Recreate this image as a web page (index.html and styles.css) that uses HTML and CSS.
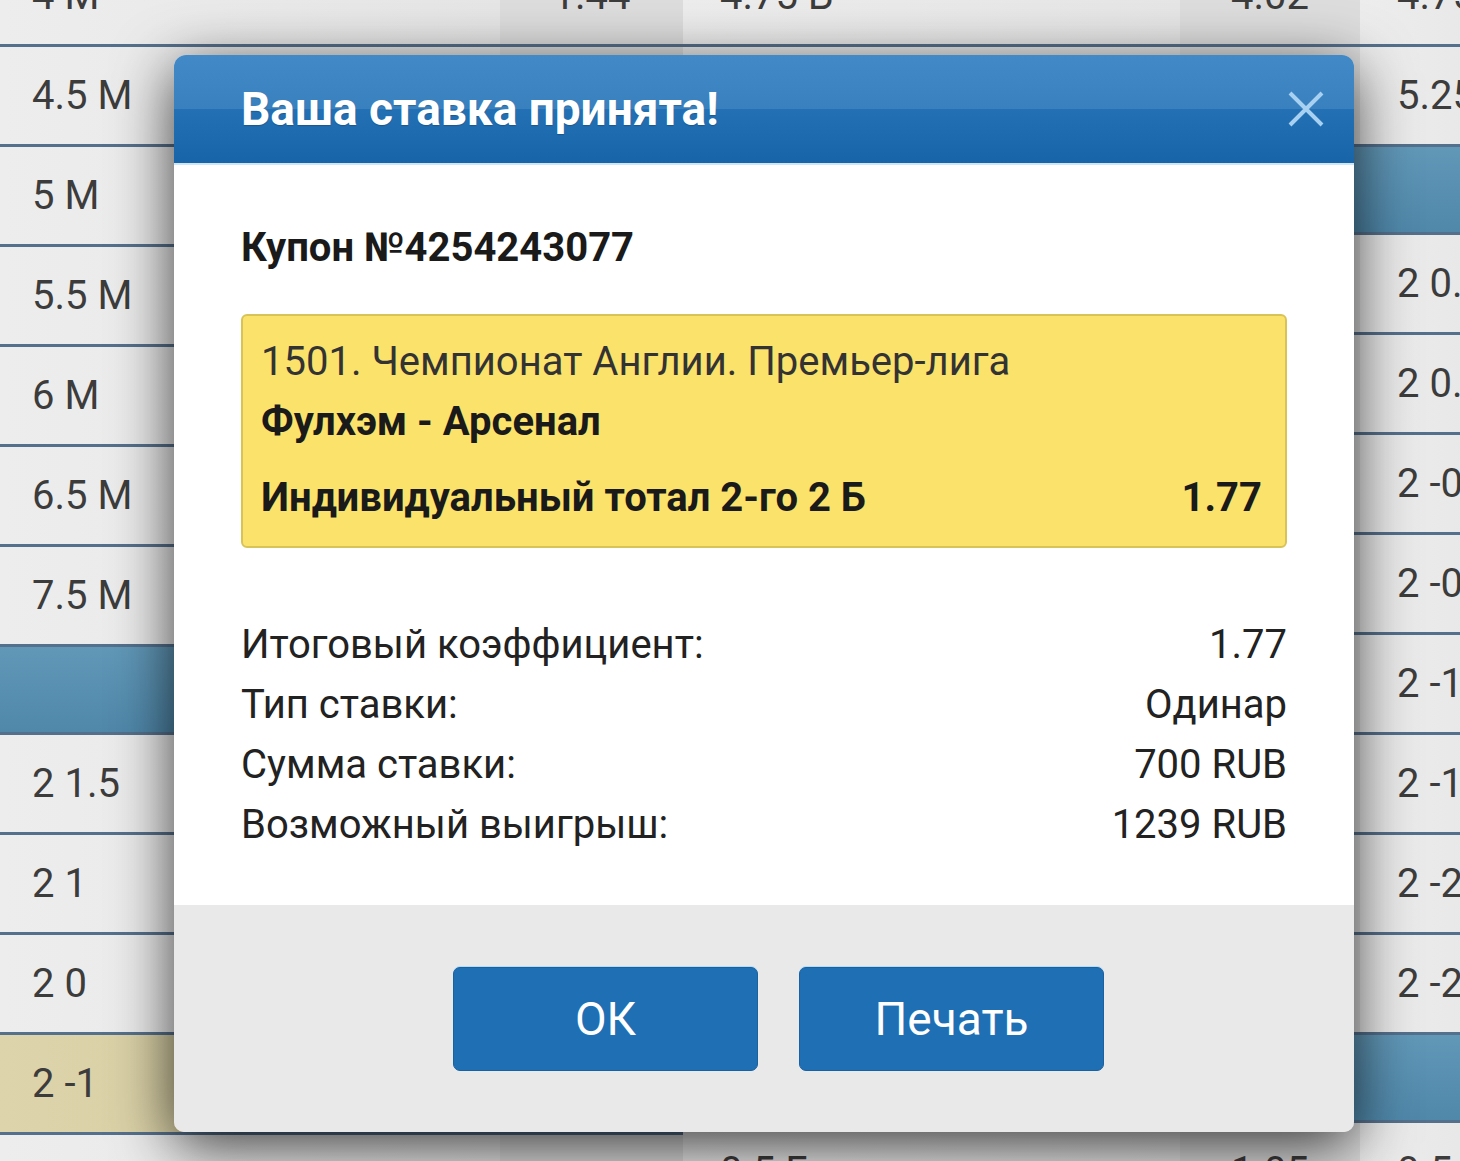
FILE: index.html
```html
<!DOCTYPE html>
<html lang="ru">
<head>
  <meta charset="UTF-8">
  <title>Ваша ставка принята</title>
  <link rel="stylesheet" href="styles.css">
</head>
<body>
  <div class="board">
    <div class="market market-a">
      <div class="row"><div class="cell label">4 М</div><div class="cell odd">1.44</div></div>
      <div class="row"><div class="cell label">4.5 М</div><div class="cell odd"></div></div>
      <div class="row"><div class="cell label">5 М</div><div class="cell odd"></div></div>
      <div class="row"><div class="cell label">5.5 М</div><div class="cell odd"></div></div>
      <div class="row"><div class="cell label">6 М</div><div class="cell odd"></div></div>
      <div class="row"><div class="cell label">6.5 М</div><div class="cell odd"></div></div>
      <div class="row"><div class="cell label">7.5 М</div><div class="cell odd"></div></div>
      <div class="row row-head"></div>
      <div class="row"><div class="cell label">2 1.5</div><div class="cell odd"></div></div>
      <div class="row"><div class="cell label">2 1</div><div class="cell odd"></div></div>
      <div class="row"><div class="cell label">2 0</div><div class="cell odd"></div></div>
      <div class="row row-picked"><div class="cell label">2 -1</div><div class="cell odd"></div></div>
      <div class="row"><div class="cell label"></div><div class="cell odd"></div></div>
    </div>

    <div class="market market-b">
      <div class="row"><div class="cell label">4.75 Б</div><div class="cell odd">4.02</div></div>
      <div class="row"><div class="cell label"></div><div class="cell odd"></div></div>
      <div class="row row-head"></div>
      <div class="row"><div class="cell label"></div><div class="cell odd"></div></div>
      <div class="row"><div class="cell label"></div><div class="cell odd"></div></div>
      <div class="row"><div class="cell label"></div><div class="cell odd"></div></div>
      <div class="row"><div class="cell label"></div><div class="cell odd"></div></div>
      <div class="row"><div class="cell label"></div><div class="cell odd"></div></div>
      <div class="row"><div class="cell label"></div><div class="cell odd"></div></div>
      <div class="row"><div class="cell label"></div><div class="cell odd"></div></div>
      <div class="row"><div class="cell label"></div><div class="cell odd"></div></div>
      <div class="row row-head"></div>
      <div class="row"><div class="cell label">0.5 Б</div><div class="cell odd">1.05</div></div>
    </div>

    <div class="market market-c">
      <div class="row"><div class="cell label">4.75 М</div></div>
      <div class="row"><div class="cell label">5.25 М</div></div>
      <div class="row row-head"></div>
      <div class="row"><div class="cell label">2 0.75</div></div>
      <div class="row"><div class="cell label">2 0.25</div></div>
      <div class="row"><div class="cell label">2 -0.25</div></div>
      <div class="row"><div class="cell label">2 -0.75</div></div>
      <div class="row"><div class="cell label">2 -1.25</div></div>
      <div class="row"><div class="cell label">2 -1.75</div></div>
      <div class="row"><div class="cell label">2 -2.25</div></div>
      <div class="row"><div class="cell label">2 -2.75</div></div>
      <div class="row row-head"></div>
      <div class="row"><div class="cell label">0.5 М</div></div>
    </div>
  </div>

  <div class="modal">
    <div class="modal-header">
      <h1>Ваша ставка принята!</h1>
      <span class="close">
        <svg width="36" height="36" viewBox="0 0 36 36">
          <path d="M2 2 L34 34 M34 2 L2 34" stroke="#a8d0f0" stroke-width="4" fill="none"/>
        </svg>
      </span>
    </div>

    <div class="modal-body">
      <h2>Купон №4254243077</h2>

      <div class="bet">
        <div class="bet-league">1501. Чемпионат Англии. Премьер-лига</div>
        <div class="bet-event">Фулхэм - Арсенал</div>
        <div class="bet-outcome">
          <span>Индивидуальный тотал 2-го 2 Б</span>
          <span>1.77</span>
        </div>
      </div>

      <div class="summary">
        <div class="summary-row"><span>Итоговый коэффициент:</span><span>1.77</span></div>
        <div class="summary-row"><span>Тип ставки:</span><span>Одинар</span></div>
        <div class="summary-row"><span>Сумма ставки:</span><span>700 RUB</span></div>
        <div class="summary-row"><span>Возможный выигрыш:</span><span>1239 RUB</span></div>
      </div>
    </div>

    <div class="modal-footer">
      <button>ОК</button>
      <button>Печать</button>
    </div>
  </div>
</body>
</html>
```

FILE: styles.css
```css
body {
  margin: 0;
  font-family: Roboto, 'Liberation Sans', sans-serif;
  background: #e6e6e6;
  overflow: hidden;
  height: 1161px;
}

/* odds table behind the dialog */
.board {
  display: flex;
  margin-top: -53px;
  height: 1214px;
  overflow: hidden;
}
.market {
  display: flex;
  flex-direction: column;
}
.market-a {
  width: 683px;
}
.market-b {
  width: 677px;
}
.market-c {
  flex: 1;
  overflow: hidden;
}
.row {
  display: flex;
  height: 100px;
  flex-shrink: 0;
  box-sizing: border-box;
  border-bottom: 3px solid #55708c;
  box-shadow: inset 0 2px 0 #d5e6f4;
}
.row-head {
  height: 88px;
  background: linear-gradient(#6198b8, #5088aa);
  box-shadow: none;
}
.cell {
  display: flex;
  align-items: center;
  font-size: 40px;
  color: #3c3c3c;
  white-space: nowrap;
}
.label {
  flex: 1;
  padding-left: 32px;
  background: linear-gradient(to right, #ededed, #e6e6e6);
}
.market-b .label,
.market-c .label {
  padding-left: 37px;
}
.odd {
  width: 183px;
  justify-content: center;
  background: #dddddd;
}
.market-b .odd {
  width: 180px;
}
.row-picked .label {
  background: linear-gradient(to right, #ddd4ab, #d2c89c);
}

/* dialog */
.modal {
  position: absolute;
  left: 174px;
  top: 55px;
  width: 1180px;
  display: flex;
  flex-direction: column;
  border-radius: 12px 12px 10px 10px;
  overflow: hidden;
  box-shadow: 0 14px 60px rgba(0, 0, 0, 0.75);
}
.modal-header {
  height: 110px;
  box-sizing: border-box;
  display: flex;
  align-items: center;
  justify-content: space-between;
  padding: 0 30px 0 67px;
  background: linear-gradient(#428ac7, #3980bf 50%, #2371b4 50%, #1864a9);
  border-bottom: 2px solid #cfe6f7;
}
.modal-header h1 {
  margin: 0;
  font-size: 46px;
  font-weight: bold;
  color: #fff;
  text-shadow: 0 1px 1px rgba(0, 0, 0, 0.2);
}
.close {
  display: flex;
  cursor: pointer;
}

.modal-body {
  background: #fff;
  padding: 58px 67px 50px;
}
.modal-body h2 {
  margin: 0 0 41px;
  font-size: 40px;
  line-height: 50px;
  font-weight: bold;
  color: #1a1a1a;
}
.bet {
  background: #fbe26b;
  border: 2px solid #d8c359;
  border-radius: 6px;
  padding: 21px 23px 23px 18px;
  font-size: 40px;
  line-height: 50px;
  color: #1a1a1a;
}
.bet-league {
  color: #333;
}
.bet-event {
  margin-top: 10px;
  font-weight: bold;
}
.bet-outcome {
  margin-top: 26px;
  display: flex;
  justify-content: space-between;
  font-weight: bold;
}
.summary {
  margin-top: 67px;
}
.summary-row {
  display: flex;
  justify-content: space-between;
  font-size: 40px;
  line-height: 60px;
  color: #222;
}

.modal-footer {
  height: 227px;
  background: #e9e9e9;
  display: flex;
  align-items: center;
  justify-content: center;
  gap: 41px;
  padding-left: 29px;
}
.modal-footer button {
  width: 305px;
  height: 104px;
  font-family: Roboto, 'Liberation Sans', sans-serif;
  font-size: 46px;
  color: #fff;
  background: #1f6fb4;
  border: 1px solid #1a619f;
  border-radius: 7px;
  box-shadow: 0 -1px 0 #b8dbf4;
  cursor: pointer;
}
```
